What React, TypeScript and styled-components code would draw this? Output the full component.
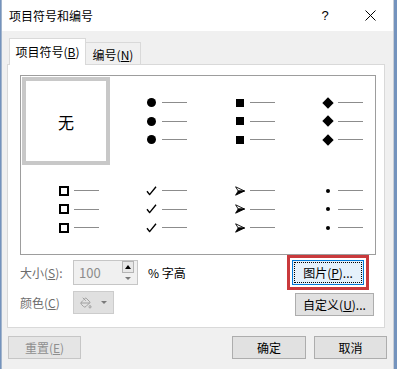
import React from 'react';
import styled, { createGlobalStyle, css } from 'styled-components';
import { PaintBucket } from 'lucide-react';

const GlobalStyle = createGlobalStyle`
  html, body {
    margin: 0;
    padding: 0;
    background: #7493bd;
  }
  body {
    font-family: "Noto Sans CJK SC", "Noto Sans", sans-serif;
    font-size: 12px;
    color: #000000;
  }
  * {
    box-sizing: border-box;
  }
`;

type BulletKind = 'disc' | 'square' | 'diamond' | 'hollow' | 'check' | 'arrow' | 'dot';

const BULLETS: BulletKind[] = ['disc', 'square', 'diamond', 'hollow', 'check', 'arrow', 'dot'];

const CheckMark = () => (
  <svg width="11" height="10" viewBox="0 0 11 10">
    <path d="M1 5.2 L3.6 8.6 L10 0.8" fill="none" stroke="#000" strokeWidth="1.4" strokeLinejoin="round" />
  </svg>
);

const ArrowHead = () => (
  <svg width="10" height="10" viewBox="0 0 10 10">
    <polygon points="0.6,0.8 9.5,5 3.2,5" fill="#fff" stroke="#000" strokeWidth="0.9" strokeLinejoin="round" />
    <polygon points="3.2,5 9.5,5 0.6,9.2" fill="#000" stroke="#000" strokeWidth="0.9" strokeLinejoin="round" />
  </svg>
);

const Symbol = ({ kind }: { kind: BulletKind }) => {
  if (kind === 'check') return <CheckMark />;
  if (kind === 'arrow') return <ArrowHead />;
  return <Shape kind={kind} />;
};

const App = () => {
  return (
    <>
      <GlobalStyle />
      <Window>
        <TitleBar>
          <Title>项目符号和编号</Title>
          <HelpButton>?</HelpButton>
          <CloseButton>
            <svg width="11" height="11" viewBox="0 0 11 11">
              <path d="M0.5 0.5 L10.5 10.5 M10.5 0.5 L0.5 10.5" stroke="#000" strokeWidth="1" />
            </svg>
          </CloseButton>
        </TitleBar>

        <TabRow>
          <Tab active>
            项目符号(<u>B</u>)
          </Tab>
          <Tab>
            编号(<u>N</u>)
          </Tab>
        </TabRow>

        <Panel>
          <Gallery>
            <Cell selected>
              <NoneText>无</NoneText>
            </Cell>
            {BULLETS.map(kind => (
              <Cell key={kind}>
                <BulletList>
                  {[0, 1, 2].map(i => (
                    <BulletItem key={i}>
                      <SymbolSlot>
                        <Symbol kind={kind} />
                      </SymbolSlot>
                      <Dash />
                    </BulletItem>
                  ))}
                </BulletList>
              </Cell>
            ))}
          </Gallery>

          <Controls>
            <Fields>
              <FieldRow>
                <Label>
                  大小(<u>S</u>):
                </Label>
                <SpinInput>
                  <SpinValue>100</SpinValue>
                  <Spinner>
                    <SpinUp>
                      <Tri up />
                    </SpinUp>
                    <SpinDown>
                      <Tri muted />
                    </SpinDown>
                  </Spinner>
                </SpinInput>
                <Unit>% 字高</Unit>
              </FieldRow>
              <FieldRow second>
                <Label>
                  颜色(<u>C</u>)
                </Label>
                <ColorButton>
                  <PaintBucket size={12} color="#a0a0a0" strokeWidth={2} />
                  <Tri muted />
                </ColorButton>
              </FieldRow>
            </Fields>

            <SideButtons>
              <Highlight>
                <Button width={72} height={25} focused>
                  图片(<u>P</u>)...
                </Button>
              </Highlight>
              <Button width={79} height={23}>
                自定义(<u>U</u>)...
              </Button>
            </SideButtons>
          </Controls>
        </Panel>

        <Footer>
          <Button width={73} height={23} disabled>
            重置(<u>E</u>)
          </Button>
          <FooterRight>
            <Button width={74} height={23}>
              确定
            </Button>
            <Button width={73} height={23}>
              取消
            </Button>
          </FooterRight>
        </Footer>
      </Window>
    </>
  );
};

const Window = styled.div`
  position: relative;
  width: 393px;
  height: 369px;
  margin-left: 1px;
  background: #f0f0f0;
  border-left: 1px solid #a3b5cc;
  border-right: 1px solid #c9ced6;
  display: flex;
  flex-direction: column;
  overflow: hidden;
`;

const TitleBar = styled.div`
  height: 31px;
  background: #ffffff;
  display: flex;
  align-items: center;
  padding-left: 7px;
`;

const Title = styled.div`
  flex: 1;
  font-size: 12px;
  line-height: 16px;
`;

const HelpButton = styled.div`
  width: 46px;
  text-align: center;
  font-family: "Liberation Sans", sans-serif;
  font-size: 13px;
`;

const CloseButton = styled.div`
  width: 45px;
  display: flex;
  justify-content: center;
  align-items: center;
`;

const TabRow = styled.div`
  display: flex;
  align-items: flex-end;
  height: 26px;
  margin-top: 7px;
  padding-left: 7px;
  position: relative;
  z-index: 1;
`;

const Tab = styled.div<{ active?: boolean }>`
  display: flex;
  align-items: center;
  justify-content: center;
  line-height: 16px;
  border: 1px solid #d9d9d9;
  border-bottom: none;
  ${({ active }) =>
    active
      ? css`
          width: 77px;
          height: 27px;
          margin-bottom: -1px;
          background: #ffffff;
        `
      : css`
          width: 55px;
          height: 22px;
          background: #f0f0f0;
          border-left: none;
          padding-top: 2px;
        `}
`;

const Panel = styled.div`
  height: 264px;
  margin: 0 8px 0 5px;
  background: #ffffff;
  border: 1px solid #d9d9d9;
  padding: 10px 9px 0 12px;
  display: flex;
  flex-direction: column;
`;

const Gallery = styled.div`
  display: grid;
  grid-template-columns: repeat(4, 88px);
  grid-template-rows: 88px 88px;
  padding: 1px;
  width: 356px;
  border: 1px solid #9d9d9d;
`;

const Cell = styled.div<{ selected?: boolean }>`
  display: flex;
  align-items: center;
  ${({ selected }) =>
    selected
      ? css`
          justify-content: center;
          border: 4px solid #c8c8c8;
        `
      : css`
          padding-left: 35px;
        `}
`;

const NoneText = styled.span`
  font-size: 16px;
  line-height: 20px;
  margin-top: 2px;
`;

const BulletList = styled.div`
  display: flex;
  flex-direction: column;
`;

const BulletItem = styled.div`
  display: flex;
  align-items: center;
  height: 18.5px;
`;

const SymbolSlot = styled.div`
  width: 13px;
  height: 12px;
  display: flex;
  align-items: center;
  justify-content: center;
  margin-right: 4px;
`;

const Shape = styled.span<{ kind: BulletKind }>`
  display: block;
  background: #000000;
  ${({ kind }) =>
    ({
      disc: css`
        width: 9px;
        height: 9px;
        border-radius: 50%;
      `,
      square: css`
        width: 8px;
        height: 8px;
      `,
      diamond: css`
        width: 8px;
        height: 8px;
        transform: rotate(45deg);
      `,
      hollow: css`
        width: 10px;
        height: 10px;
        background: #ffffff;
        border: 2.5px solid #000000;
      `,
      dot: css`
        width: 4px;
        height: 4px;
        border-radius: 50%;
      `,
      check: css``,
      arrow: css``,
    }[kind])}
`;

const Dash = styled.span`
  display: block;
  width: 25px;
  height: 1px;
  background: #8c8c8c;
`;

const Controls = styled.div`
  display: flex;
  justify-content: space-between;
  padding-right: 1px;
`;

const Fields = styled.div`
  display: flex;
  flex-direction: column;
  padding-top: 5px;
`;

const FieldRow = styled.div<{ second?: boolean }>`
  display: flex;
  align-items: center;
  margin-top: ${({ second }) => (second ? '6px' : '0')};
`;

const Label = styled.span`
  width: 53px;
  color: #6d6d6d;
  line-height: 16px;
`;

const SpinInput = styled.div`
  width: 65px;
  height: 25px;
  border: 1px solid #c6c6c6;
  background: #f0f0f0;
  display: flex;
  align-items: center;
  padding: 0 3px 0 5px;
`;

const SpinValue = styled.span`
  flex: 1;
  color: #8c8c8c;
  font-size: 13px;
  line-height: 16px;
`;

const Spinner = styled.div`
  display: flex;
  flex-direction: column;
  width: 12px;
`;

const SpinUp = styled.div`
  height: 12px;
  border: 1px solid #b4b4b4;
  background: #e8e8e8;
  display: flex;
  align-items: center;
  justify-content: center;
`;

const SpinDown = styled.div`
  height: 11px;
  display: flex;
  align-items: center;
  justify-content: center;
`;

const Tri = styled.span<{ up?: boolean; muted?: boolean }>`
  width: 0;
  height: 0;
  border-left: 3px solid transparent;
  border-right: 3px solid transparent;
  ${({ up, muted }) =>
    up
      ? css`
          border-bottom: 4px solid ${muted ? '#8a8a8a' : '#000000'};
        `
      : css`
          border-top: 3px solid ${muted ? '#7a7a7a' : '#000000'};
        `}
`;

const Unit = styled.span`
  margin-left: 10px;
  line-height: 16px;
`;

const ColorButton = styled.div`
  width: 41px;
  height: 23px;
  border: 1px solid #cccccc;
  background: #e0e0e0;
  display: flex;
  align-items: center;
  gap: 9px;
  padding-left: 6px;
`;

const SideButtons = styled.div`
  display: flex;
  flex-direction: column;
  align-items: flex-end;
`;

const Highlight = styled.div`
  border: 3px solid #c9393c;
  padding: 2px;
  margin-right: 5px;
  margin-bottom: 3px;
`;

const Button = styled.div<{ width: number; height: number; focused?: boolean; disabled?: boolean }>`
  width: ${({ width }) => width}px;
  height: ${({ height }) => height}px;
  display: flex;
  align-items: center;
  justify-content: center;
  line-height: 16px;
  background: #e1e1e1;
  border: 1px solid #adadad;
  color: #000000;
  position: relative;
  ${({ focused }) =>
    focused &&
    css`
      background: #e5f1fb;
      border-color: #0078d7;
      outline: 1px dotted #000000;
      outline-offset: -3px;
    `}
  ${({ disabled }) =>
    disabled &&
    css`
      background: #e5e5e5;
      border-color: #c6c6c6;
      color: #8f8f8f;
    `}
`;

const Footer = styled.div`
  display: flex;
  justify-content: space-between;
  margin-top: 8px;
  padding: 0 6px 0 6px;
`;

const FooterRight = styled.div`
  display: flex;
  gap: 8px;
`;

export default App;
